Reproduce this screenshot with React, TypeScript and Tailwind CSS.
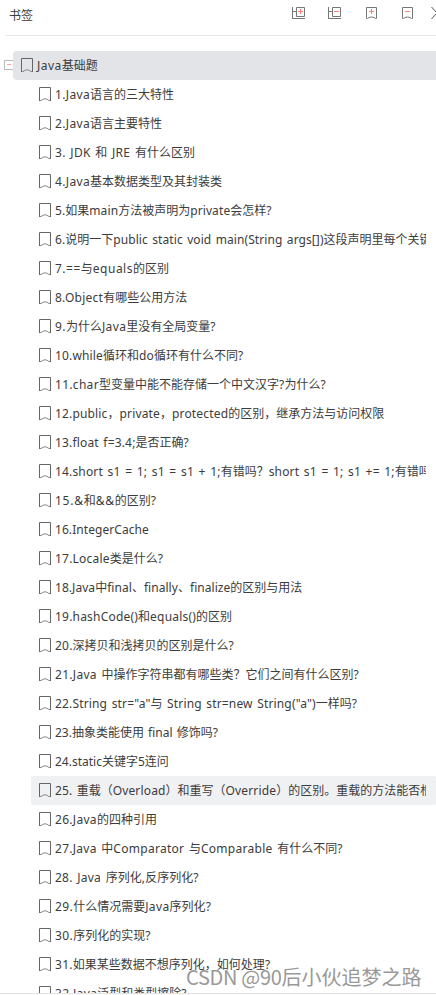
import React from "react";

type Item = { text: string; spacing?: string; hovered?: boolean };

const items: Item[] = [
  { text: "1.Java语言的三大特性", spacing: "tracking-[0.35px]" },
  { text: "2.Java语言主要特性", spacing: "tracking-[0.35px]" },
  { text: "3. JDK 和 JRE 有什么区别", spacing: "tracking-[0.3px] [word-spacing:1.2px]" },
  { text: "4.Java基本数据类型及其封装类", spacing: "tracking-[0.35px]" },
  { text: "5.如果main方法被声明为private会怎样?", spacing: "tracking-[0.1px]" },
  {
    text: "6.说明一下public static void main(String args[])这段声明里每个关键字的作用",
    spacing: "tracking-[0.08px] [word-spacing:1.2px]",
  },
  { text: "7.==与equals的区别", spacing: "tracking-[0.5px]" },
  { text: "8.Object有哪些公用方法", spacing: "tracking-[0.25px]" },
  { text: "9.为什么Java里没有全局变量?", spacing: "tracking-[0.4px]" },
  { text: "10.while循环和do循环有什么不同?", spacing: "tracking-[0.15px]" },
  { text: "11.char型变量中能不能存储一个中文汉字?为什么?", spacing: "tracking-[0.3px]" },
  { text: "12.public，private，protected的区别，继承方法与访问权限", spacing: "tracking-[0.16px]" },
  { text: "13.float f=3.4;是否正确?", spacing: "tracking-[0.17px] [word-spacing:1.2px]" },
  {
    text: "14.short s1 = 1; s1 = s1 + 1;有错吗？short s1 = 1; s1 += 1;有错吗?",
    spacing: "tracking-[0.16px] [word-spacing:1.35px]",
  },
  { text: "15.&和&&的区别?", spacing: "tracking-[0.75px]" },
  { text: "16.IntegerCache", spacing: "tracking-[0.07px]" },
  { text: "17.Locale类是什么?", spacing: "tracking-[0.2px]" },
  { text: "18.Java中final、finally、finalize的区别与用法", spacing: "tracking-[0.05px]" },
  { text: "19.hashCode()和equals()的区别", spacing: "tracking-[0.2px]" },
  { text: "20.深拷贝和浅拷贝的区别是什么?", spacing: "tracking-[0.2px]" },
  {
    text: "21.Java 中操作字符串都有哪些类？它们之间有什么区别?",
    spacing: "tracking-[0.3px] [word-spacing:1.2px]",
  },
  {
    text: '22.String str="a"与 String str=new String("a")一样吗?',
    spacing: "tracking-[0.16px] [word-spacing:1.2px]",
  },
  { text: "23.抽象类能使用 final 修饰吗?", spacing: "[word-spacing:1px]" },
  { text: "24.static关键字5连问" },
  {
    text: "25. 重载（Overload）和重写（Override）的区别。重载的方法能否根据返回类型进行区分?",
    spacing: "tracking-[0.15px] [word-spacing:1px]",
    hovered: true,
  },
  { text: "26.Java的四种引用", spacing: "tracking-[0.3px]" },
  {
    text: "27.Java 中Comparator 与Comparable 有什么不同?",
    spacing: "tracking-[0.28px] [word-spacing:1.2px]",
  },
  { text: "28. Java 序列化,反序列化?", spacing: "tracking-[0.25px] [word-spacing:1.2px]" },
  { text: "29.什么情况需要Java序列化?", spacing: "tracking-[0.4px]" },
  { text: "30.序列化的实现?", spacing: "tracking-[0.4px]" },
  { text: "31.如果某些数据不想序列化，如何处理?", spacing: "tracking-[0.3px]" },
  { text: "32.Java泛型和类型擦除?", spacing: "tracking-[0.35px]" },
];

// Latin runs get their own spacing, Chinese glyphs stay on the 12px grid
const Label = ({ text, spacing }: { text: string; spacing?: string }) => (
  <>
    {text.split(/([\x20-\x7e]+)/).map((part, i) =>
      i % 2 ? (
        <span key={i} className={spacing}>{part}</span>
      ) : (
        part
      )
    )}
  </>
);

const BookmarkIcon = () => (
  <svg width="12" height="14" viewBox="0 0 12 14" fill="none" stroke="#666" className="mb-px shrink-0">
    <path d="M0.5 14V0.5H11.5V14" />
    <path d="M1 13.5H2L4.2 12.2Q6 11.4 7.8 12.2L10 13.5H11" stroke="#888" />
  </svg>
);

const ExpandIcon = ({ plus }: { plus?: boolean }) => (
  <svg width="14" height="14" viewBox="0 0 14 14" fill="none" stroke="#777">
    <path d="M4.5 1.5H12.5V10.5H4.5Z" />
    <path d="M0.5 1V13M0 12.5H13M0.5 5.5H4" />
    <path d={plus ? "M6 5.5H11M8.5 3V8" : "M6 5.5H11"} stroke="#ff7d76" />
  </svg>
);

const MarkIcon = ({ plus }: { plus?: boolean }) => (
  <svg width="12" height="14" viewBox="0 0 12 14" fill="none" stroke="#777">
    <path d="M0.5 12.5V1.5H10.5V12.5H9.5L8 11.5Q5.5 10.5 3 11.5L1.5 12.5Z" />
    <path d={plus ? "M3 5.5H8M5.5 3V8" : "M3 5.5H8"} stroke="#ff7d76" />
  </svg>
);

const App = () => {
  return (
    <div className="relative flex h-[995px] w-[436px] flex-col overflow-hidden bg-white font-['Noto_Sans','Noto_Sans_CJK_SC',sans-serif] text-xs text-[#3c3c3c]">
      <header className="ml-1.5 flex h-9 shrink-0 items-start border-b border-[#e6e6e8]">
        <h1 className="w-[286px] pt-2 pl-[3px] leading-4">书签</h1>
        <div className="flex w-[144px] shrink-0 pt-1.5">
          <div className="w-9"><ExpandIcon plus /></div>
          <div className="w-[38px]"><ExpandIcon /></div>
          <div className="w-9"><MarkIcon plus /></div>
          <div className="w-[29px]"><MarkIcon /></div>
          <svg width="5" height="14" viewBox="0 0 5 14" fill="none" stroke="#555" className="shrink-0">
            <path d="M0.5 1L6 7L0.5 13" />
          </svg>
        </div>
      </header>

      <main className="mt-[15px] h-[943px] shrink-0 overflow-hidden border-b border-[#e2e2e2]">
        <div className="flex h-[29px] items-center">
          <svg width="10" height="10" viewBox="0 0 10 10" fill="none" className="mb-0.5 ml-1 shrink-0">
            <rect x="0.5" y="0.5" width="9" height="9" stroke="#bbb" />
            <path d="M3 4.5H7" stroke="#f9a49e" />
          </svg>
          <div className="-ml-px flex h-full flex-1 items-center rounded-l-sm bg-[#e3e4e8] pl-2">
            <BookmarkIcon />
            <span className="ml-1">
              <Label text="Java基础题" spacing="tracking-[0.45px]" />
            </span>
          </div>
        </div>

        <ul>
          {items.map((item) => (
            <li
              key={item.text}
              className={`ml-[31px] flex h-[29px] items-center rounded-xs pr-2.5 pl-2 ${item.hovered ? "bg-[#f0f1f3]" : ""}`}
            >
              <BookmarkIcon />
              <span className="ml-1 flex-1 overflow-hidden whitespace-pre">
                <Label text={item.text} spacing={item.spacing} />
              </span>
            </li>
          ))}
        </ul>
      </main>

      <p className="absolute top-[963px] left-[186px] font-['Noto_Sans_CJK_SC',sans-serif] text-xl leading-7 whitespace-nowrap text-[#999]">
        <Label text="CSDN @90后小伙追梦之路" spacing="tracking-[-0.3px]" />
      </p>
    </div>
  );
};

export default App;
